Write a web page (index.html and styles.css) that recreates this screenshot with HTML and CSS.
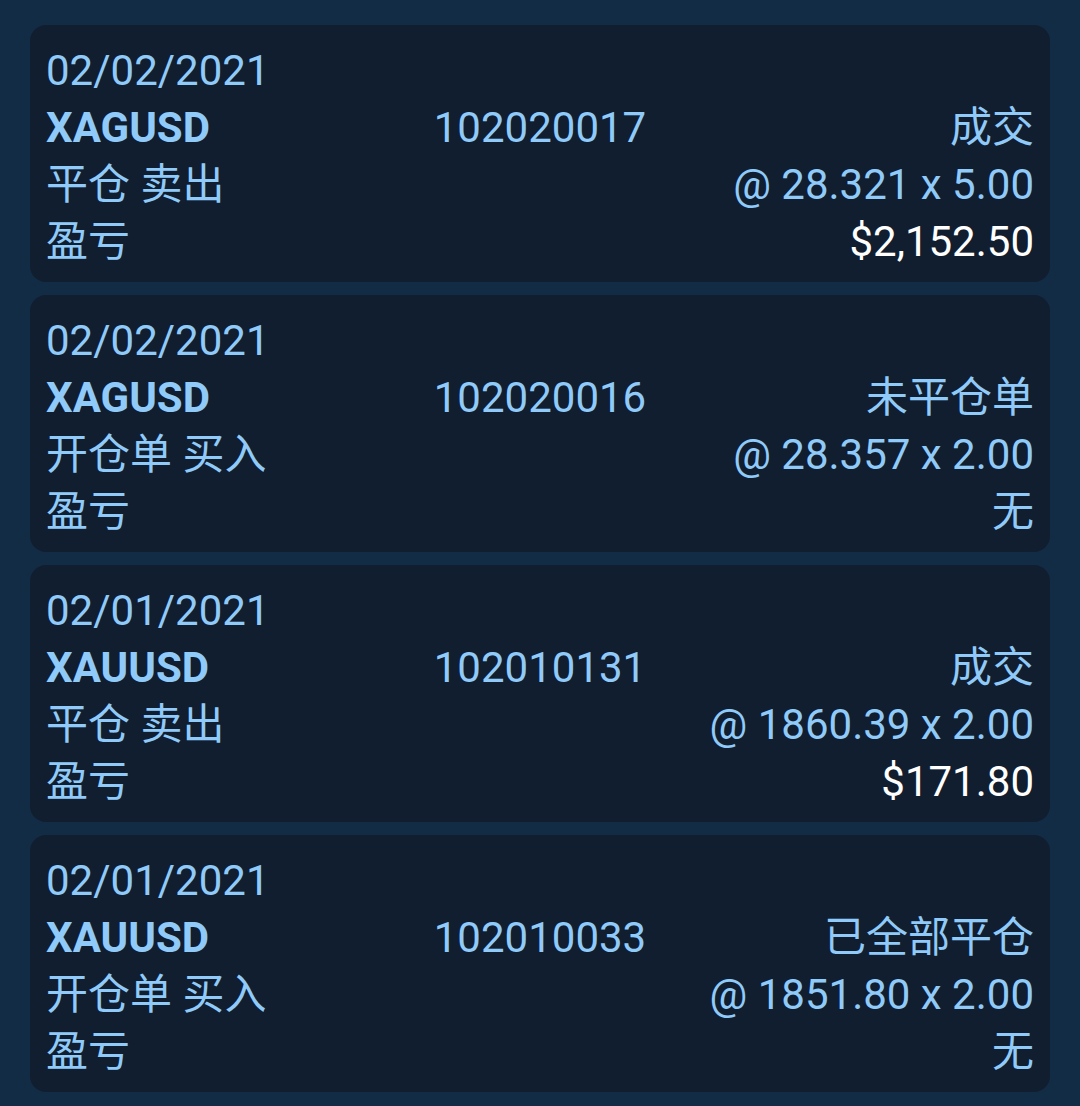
FILE: index.html
```html
<!DOCTYPE html>
<html lang="zh-CN">
<head>
    <meta charset="UTF-8">
    <meta name="viewport" content="width=device-width, initial-scale=1.0">
    <title>订单历史</title>
    <link rel="stylesheet" href="styles.css">
</head>
<body>
    <main class="orders">
        <div class="order">
            <div class="row">02/02/2021</div>
            <div class="row three">
                <span class="symbol">XAGUSD</span>
                <span class="ticket">102020017</span>
                <span class="right">成交</span>
            </div>
            <div class="row split">
                <span>平仓 卖出</span>
                <span class="right">@ 28.321 x 5.00</span>
            </div>
            <div class="row split">
                <span>盈亏</span>
                <span class="right money">$2,152.50</span>
            </div>
        </div>
        <div class="order">
            <div class="row">02/02/2021</div>
            <div class="row three">
                <span class="symbol">XAGUSD</span>
                <span class="ticket">102020016</span>
                <span class="right">未平仓单</span>
            </div>
            <div class="row split">
                <span>开仓单 买入</span>
                <span class="right">@ 28.357 x 2.00</span>
            </div>
            <div class="row split">
                <span>盈亏</span>
                <span class="right">无</span>
            </div>
        </div>
        <div class="order">
            <div class="row">02/01/2021</div>
            <div class="row three">
                <span class="symbol">XAUUSD</span>
                <span class="ticket">102010131</span>
                <span class="right">成交</span>
            </div>
            <div class="row split">
                <span>平仓 卖出</span>
                <span class="right">@ 1860.39 x 2.00</span>
            </div>
            <div class="row split">
                <span>盈亏</span>
                <span class="right money">$171.80</span>
            </div>
        </div>
        <div class="order">
            <div class="row">02/01/2021</div>
            <div class="row three">
                <span class="symbol">XAUUSD</span>
                <span class="ticket">102010033</span>
                <span class="right">已全部平仓</span>
            </div>
            <div class="row split">
                <span>开仓单 买入</span>
                <span class="right">@ 1851.80 x 2.00</span>
            </div>
            <div class="row split">
                <span>盈亏</span>
                <span class="right">无</span>
            </div>
        </div>
    </main>
</body>
</html>
```

FILE: styles.css
```css
body {
    margin: 0;
    padding: 0;
    background-color: #132c45;
    font-family: Roboto, "Noto Sans CJK SC", sans-serif;
    color: #90caf9;
}
.orders {
    display: flex;
    flex-direction: column;
    gap: 13px;
    padding: 25px 30px;
}
.order {
    background-color: #111e2f;
    border-radius: 16px;
    padding: 17px 16px 12px 16px;
    font-size: 42px;
    line-height: 57px;
}
.row {
    white-space: nowrap;
}
.split {
    display: flex;
    justify-content: space-between;
}
.three {
    display: grid;
    grid-template-columns: 1fr auto 1fr;
}
.symbol {
    font-weight: bold;
}
.right {
    text-align: right;
}
.money {
    color: #ffffff;
}
```
